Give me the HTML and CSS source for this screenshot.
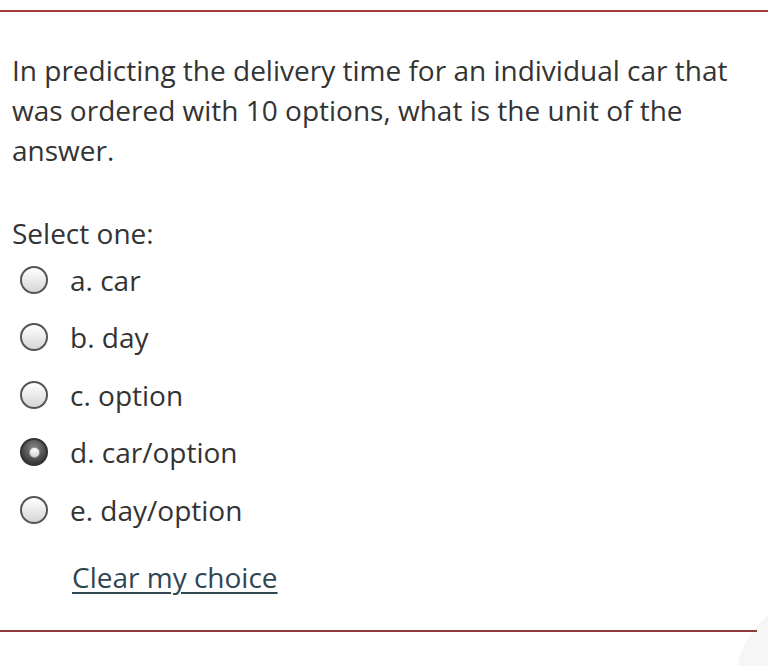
FILE: index.html
```html
<!DOCTYPE html>
<html>
<head>
<meta charset="utf-8">
<link rel="stylesheet" href="styles.css">
</head>
<body>
<div class="page">
  <hr class="rule top">
  <div class="question">
    <p class="qtext">In predicting the delivery time for an individual car that was ordered with 10 options, what is the unit of the answer.</p>
    <p class="prompt">Select one:</p>
    <div class="answers">
      <label class="opt"><span class="radio"></span><span class="lbl">a. car</span></label>
      <label class="opt"><span class="radio"></span><span class="lbl">b. day</span></label>
      <label class="opt"><span class="radio"></span><span class="lbl">c. option</span></label>
      <label class="opt"><span class="radio checked"></span><span class="lbl">d. car/option</span></label>
      <label class="opt"><span class="radio"></span><span class="lbl">e. day/option</span></label>
    </div>
    <a class="clear" href="#">Clear my choice</a>
  </div>
  <hr class="rule bottom">
</div>
</body>
</html>
```
FILE: styles.css
```css
html, body {
  margin: 0;
  padding: 0;
}
body {
  font-family: "Open Sans", "Liberation Sans", sans-serif;
  color: #333;
  width: 768px;
  height: 666px;
  overflow: hidden;
  background: radial-gradient(circle at 818px 680px, #f6f6f6 0 81px, #ffffff 82px) no-repeat;
  background-color: #fff;
}
.page {
  padding-top: 10px;
}
.rule {
  border: 0;
  height: 2px;
  margin: 0;
}
.rule.top {
  background: #a33b3b;
  width: 768px;
}
.rule.bottom {
  background: #8e3c3a;
  width: 757px;
  margin-top: 33px;
}
.question {
  padding: 38px 12px 0 12px;
}
.qtext {
  margin: 0;
  font-size: 28px;
  line-height: 40px;
}
.prompt {
  margin: 43px 0 0 0;
  font-size: 28px;
  line-height: 40px;
}
.answers {
  display: flex;
  flex-direction: column;
  margin-top: -2px;
}
.opt {
  display: flex;
  align-items: center;
  height: 57.5px;
  font-size: 28px;
}
.radio {
  box-sizing: border-box;
  width: 28px;
  height: 28px;
  border-radius: 50%;
  border: 2px solid #555;
  background: linear-gradient(#ffffff, #d6d6d6);
  margin-left: 8px;
  margin-right: 22px;
  display: flex;
  align-items: center;
  justify-content: center;
}
.radio.checked {
  background: radial-gradient(circle at 50% 35%, #8a8a8a, #3a3a3a 75%);
  border-color: #333;
}
.radio.checked::after {
  content: "";
  box-sizing: border-box;
  width: 11px;
  height: 11px;
  border-radius: 50%;
  border: 1px solid #999;
  background: linear-gradient(#ffffff, #d4d4d4);
}
.clear {
  display: inline-block;
  margin: 18px 0 0 60px;
  font-size: 28px;
  color: #2f4650;
  text-decoration: underline;
  text-decoration-thickness: 2px;
  text-underline-offset: 4px;
  line-height: 40px;
}
```
